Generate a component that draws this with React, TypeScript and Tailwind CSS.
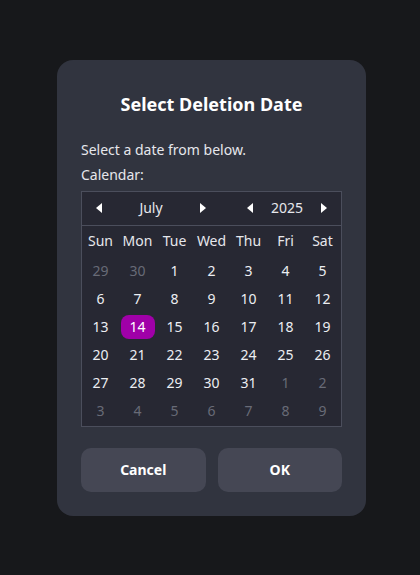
import { useState } from "react";

const WEEKDAYS = ["Sun", "Mon", "Tue", "Wed", "Thu", "Fri", "Sat"];

// 6 semanas, julho 2025 começa numa terça
const DAYS: { day: number; current: boolean }[] = [
  { day: 29, current: false },
  { day: 30, current: false },
  ...Array.from({ length: 31 }, (_, i) => ({ day: i + 1, current: true })),
  ...Array.from({ length: 9 }, (_, i) => ({ day: i + 1, current: false })),
];

function Arrow({ dir }: { dir: "left" | "right" }) {
  return (
    <svg width="6" height="10" viewBox="0 0 6 10" className="text-white">
      {dir === "left" ? (
        <path d="M6 0 L0 5 L6 10 Z" fill="currentColor" />
      ) : (
        <path d="M0 0 L6 5 L0 10 Z" fill="currentColor" />
      )}
    </svg>
  );
}

export default function App() {
  const [selected, setSelected] = useState(14);

  return (
    <div
      className="flex h-[575px] w-full items-center justify-center bg-[#17181b]"
      style={{ fontFamily: '"Noto Sans", "Open Sans", sans-serif' }}
    >
      <div className="ml-[3px] w-[309px] rounded-2xl bg-[#31343f] px-6 pt-[30px] pb-6">
        <h2 className="text-center text-[18px] leading-7 font-bold text-white">
          Select Deletion Date
        </h2>

        <p className="mt-[22px] text-sm leading-5 text-[#e6e7ec]">Select a date from below.</p>
        <p className="mt-[5px] text-sm leading-5 text-[#e6e7ec]">Calendar:</p>

        <div className="mt-[6px] border border-[#4b4e5c] bg-[#272833]">
          <div className="flex h-[34px] items-center justify-between border-b border-[#4b4e5c] px-[14px] text-sm text-[#e6e7ec]">
            <div className="flex w-[110px] items-center justify-between">
              <button><Arrow dir="left" /></button>
              <span>July</span>
              <button><Arrow dir="right" /></button>
            </div>
            <div className="flex w-[80px] items-center justify-between">
              <button><Arrow dir="left" /></button>
              <span>2025</span>
              <button><Arrow dir="right" /></button>
            </div>
          </div>

          <div className="grid grid-cols-7 pb-[1px]">
            {WEEKDAYS.map((w) => (
              <div key={w} className="flex h-[31px] items-center justify-center text-sm text-[#e6e7ec]">
                {w}
              </div>
            ))}
            {DAYS.map((d, i) => (
              <div key={i} className="flex h-[28px] items-center justify-center">
                <button
                  onClick={() => d.current && setSelected(d.day)}
                  className={
                    d.current && d.day === selected
                      ? "flex h-[24px] w-[34px] items-center justify-center rounded-lg bg-[#a000a8] text-sm text-white"
                      : d.current
                        ? "text-sm text-[#eceef2]"
                        : "text-sm text-[#686b77]"
                  }
                >
                  {d.day}
                </button>
              </div>
            ))}
          </div>
        </div>

        <div className="mt-[21px] flex gap-3">
          <button className="h-11 flex-1 rounded-[10px] bg-[#454754] text-sm font-bold text-white">
            Cancel
          </button>
          <button className="h-11 flex-1 rounded-[10px] bg-[#454754] text-sm font-bold text-white">
            OK
          </button>
        </div>
      </div>
    </div>
  );
}
